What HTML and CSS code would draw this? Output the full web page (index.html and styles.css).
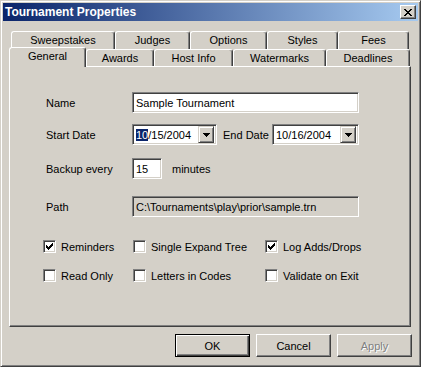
FILE: index.html
```html
<!DOCTYPE html>
<html lang="en">
<head>
  <meta charset="UTF-8" />
  <title>Tournament Properties</title>
  <link rel="stylesheet" href="styles.css">
</head>
<body>
  <div class="window">
    <div class="titlebar">
      <span class="title">Tournament Properties</span>
      <div class="close">
        <svg width="8" height="7" viewBox="0 0 8 7" shape-rendering="crispEdges"><path fill="#000" d="M0 0h2v1h-2zM6 0h2v1h-2zM1 1h2v1h-2zM5 1h2v1h-2zM2 2h4v1h-4zM3 3h2v1h-2zM2 4h4v1h-4zM1 5h2v1h-2zM5 5h2v1h-2zM0 6h2v1h-2zM6 6h2v1h-2z"/></svg>
      </div>
    </div>

    <div class="content">
      <div class="tabs">
        <div class="tab-row back">
          <div class="tab w104">Sweepstakes</div>
          <div class="tab w75">Judges</div>
          <div class="tab w77">Options</div>
          <div class="tab w71">Styles</div>
          <div class="tab w71">Fees</div>
        </div>
        <div class="tab-row front">
          <div class="tab active w77">General</div>
          <div class="tab w68">Awards</div>
          <div class="tab w79">Host Info</div>
          <div class="tab w93">Watermarks</div>
          <div class="tab w84">Deadlines</div>
        </div>
      </div>

      <div class="panel">
        <div class="row r-name">
          <span class="label">Name</span>
          <div class="field w-long">Sample Tournament</div>
        </div>
        <div class="row r-date">
          <span class="label">Start Date</span>
          <div class="field combo w-start">
            <span class="combo-text"><span class="sel">10</span>/15/2004</span>
            <span class="drop"><svg width="7" height="4" viewBox="0 0 7 4" shape-rendering="crispEdges"><path fill="#000" d="M0 0h7v1h-7zM1 1h5v1h-5zM2 2h3v1h-3zM3 3h1v1h-1z"/></svg></span>
          </div>
          <span class="end-label">End Date</span>
          <div class="field combo w-end">
            <span class="combo-text">10/16/2004</span>
            <span class="drop"><svg width="7" height="4" viewBox="0 0 7 4" shape-rendering="crispEdges"><path fill="#000" d="M0 0h7v1h-7zM1 1h5v1h-5zM2 2h3v1h-3zM3 3h1v1h-1z"/></svg></span>
          </div>
        </div>
        <div class="row r-backup">
          <span class="label">Backup every</span>
          <div class="field w-num">15</div>
          <span class="unit">minutes</span>
        </div>
        <div class="row r-path">
          <span class="label">Path</span>
          <div class="field readonly w-long">C:\Tournaments\play\prior\sample.trn</div>
        </div>

        <div class="checks">
          <label class="check"><span class="box checked"><svg width="7" height="7" viewBox="0 0 7 7" shape-rendering="crispEdges"><path fill="#000" d="M0 2h1v3h-1zM1 3h1v3h-1zM2 4h1v3h-1zM3 3h1v3h-1zM4 2h1v3h-1zM5 1h1v3h-1zM6 0h1v3h-1z"/></svg></span>Reminders</label>
          <label class="check"><span class="box"></span>Single Expand Tree</label>
          <label class="check"><span class="box checked"><svg width="7" height="7" viewBox="0 0 7 7" shape-rendering="crispEdges"><path fill="#000" d="M0 2h1v3h-1zM1 3h1v3h-1zM2 4h1v3h-1zM3 3h1v3h-1zM4 2h1v3h-1zM5 1h1v3h-1zM6 0h1v3h-1z"/></svg></span>Log Adds/Drops</label>
          <label class="check"><span class="box"></span>Read Only</label>
          <label class="check"><span class="box"></span>Letters in Codes</label>
          <label class="check"><span class="box"></span>Validate on Exit</label>
        </div>
      </div>

      <div class="buttons">
        <div class="btn default">OK</div>
        <div class="btn">Cancel</div>
        <div class="btn disabled">Apply</div>
      </div>
    </div>
  </div>
</body>
</html>
```

FILE: styles.css
```css
html, body {
  margin: 0;
  padding: 0;
  background-color: #d4d0c8;
  font-family: "Liberation Sans", Arial, sans-serif;
  font-size: 11px;
  color: #000;
}

.window {
  width: 421px;
  height: 367px;
  box-sizing: border-box;
  border: 1px solid;
  border-color: #d4d0c8 #404040 #404040 #d4d0c8;
  box-shadow: inset 1px 1px #fff, inset -1px -1px #808080;
  padding: 2px;
  background: #d4d0c8;
}

/* title bar */
.titlebar {
  height: 18px;
  display: flex;
  align-items: center;
  justify-content: space-between;
  padding: 0 2px 0 2px;
  background: linear-gradient(to right, #0a246a, #a6caf0);
}

.title {
  color: #fff;
  font-weight: bold;
  font-size: 12px;
}

.close {
  width: 16px;
  height: 14px;
  box-sizing: border-box;
  background: #d4d0c8;
  border: 1px solid;
  border-color: #fff #404040 #404040 #fff;
  box-shadow: inset -1px -1px #808080;
  display: flex;
  align-items: center;
  justify-content: center;
  padding-right: 1px;
}

.content {
  padding: 0 6px;
}

/* tabs */
.tabs {
  margin-top: 10px;
}

.tab-row {
  display: flex;
  align-items: flex-end;
}

.tab-row.back {
  height: 18px;
  padding-left: 2px;
}

.tab-row.front {
  height: 17px;
}

.tab {
  box-sizing: border-box;
  height: 100%;
  border: 1px solid;
  border-bottom: none;
  border-color: #fff #404040 #fff #fff;
  border-radius: 3px 3px 0 0;
  box-shadow: inset -1px 0 #808080;
  display: flex;
  align-items: center;
  justify-content: center;
  padding-bottom: 1px;
  background: #d4d0c8;
}

.tab-row.back .tab {
  padding-bottom: 2px;
}

.tab.active {
  position: relative;
  z-index: 1;
  height: 20px;
  margin-bottom: -1px;
  padding-bottom: 3px;
}

.w68 { width: 68px; }
.w71 { width: 71px; }
.w75 { width: 75px; }
.w77 { width: 77px; }
.w79 { width: 79px; }
.w84 { width: 84px; }
.w93 { width: 93px; }
.w104 { width: 104px; }

/* page */
.panel {
  width: 402px;
  height: 261px;
  box-sizing: border-box;
  border: 1px solid;
  border-color: #fff #404040 #404040 #fff;
  box-shadow: inset -1px -1px #808080;
  padding: 25px 0 0 36px;
}

.row {
  display: flex;
  align-items: center;
  height: 21px;
}

.r-date { margin-top: 11px; }
.r-backup { margin-top: 13px; }
.r-path { margin-top: 17px; }

.label {
  width: 86px;
  flex: none;
}

.field {
  box-sizing: border-box;
  height: 21px;
  background: #fff;
  border: 1px solid;
  border-color: #808080 #fff #fff #808080;
  box-shadow: inset 1px 1px #404040, inset -1px -1px #d4d0c8;
  padding: 0 3px;
  display: flex;
  align-items: center;
  white-space: nowrap;
  overflow: hidden;
}

.field.readonly {
  background: #d4d0c8;
}

.w-long { width: 227px; }
.w-start { width: 85px; }
.w-end { width: 87px; }
.w-num { width: 30px; }

.combo {
  padding: 0 2px 0 3px;
  justify-content: space-between;
}

.sel {
  background: #0a246a;
  color: #fff;
}

.drop {
  width: 16px;
  height: 17px;
  box-sizing: border-box;
  background: #d4d0c8;
  border: 1px solid;
  border-color: #d4d0c8 #404040 #404040 #d4d0c8;
  box-shadow: inset 1px 1px #fff, inset -1px -1px #808080;
  display: flex;
  align-items: center;
  justify-content: center;
  flex: none;
}

.end-label {
  width: 55px;
  box-sizing: border-box;
  padding-left: 6px;
  flex: none;
}

.unit {
  margin-left: 10px;
}

/* checkboxes */
.checks {
  margin: 23px 0 0 -3px;
  display: grid;
  grid-template-columns: 90px 132px auto;
  row-gap: 16px;
}

.check {
  display: flex;
  align-items: center;
  height: 13px;
  white-space: nowrap;
}

.box {
  width: 13px;
  height: 13px;
  box-sizing: border-box;
  background: #fff;
  border: 1px solid;
  border-color: #808080 #fff #fff #808080;
  box-shadow: inset 1px 1px #404040, inset -1px -1px #d4d0c8;
  margin-right: 5px;
  display: flex;
  align-items: center;
  justify-content: center;
  flex: none;
}

/* dialog buttons */
.buttons {
  margin-top: 7px;
  display: flex;
  justify-content: flex-end;
  gap: 6px;
}

.btn {
  width: 75px;
  height: 23px;
  box-sizing: border-box;
  border: 1px solid;
  border-color: #fff #404040 #404040 #fff;
  box-shadow: inset -1px -1px #808080;
  display: flex;
  align-items: center;
  justify-content: center;
}

.btn.default {
  border-color: #000;
  box-shadow: inset 1px 1px #fff, inset -1px -1px #404040, inset -2px -2px #808080;
}

.btn.disabled {
  color: #808080;
  text-shadow: 1px 1px #fff;
}
```
